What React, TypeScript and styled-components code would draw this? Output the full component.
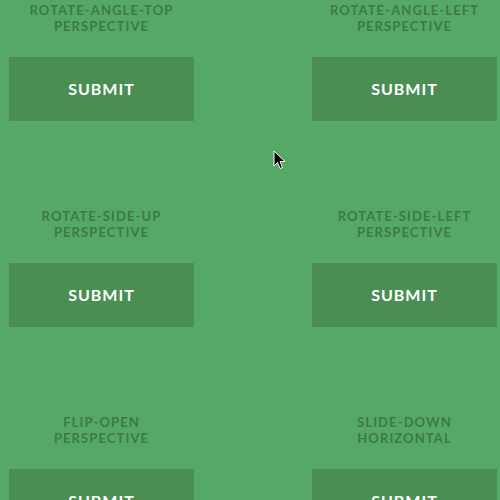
import React from "react";
import styled, { createGlobalStyle } from "styled-components";

const Global = createGlobalStyle`
  html, body {
    margin: 0;
    padding: 0;
    background: #55a865;
    overflow: hidden;
  }
  body {
    font-family: Lato, "Open Sans", sans-serif;
  }
`;

const Page = styled.div`
  position: relative;
  width: 500px;
  height: 500px;
  padding: 2px 0 0 9px;
  box-sizing: border-box;
  overflow: hidden;
`;

const Grid = styled.div`
  display: grid;
  grid-template-columns: 185px 185px;
  column-gap: 118px;
  row-gap: 87px;
`;

const Cell = styled.div`
  display: flex;
  flex-direction: column;
  align-items: stretch;
`;

const Label = styled.div`
  height: 32px;
  font-size: 13px;
  line-height: 16px;
  font-weight: 700;
  letter-spacing: 1.1px;
  text-transform: uppercase;
  text-align: center;
  color: #3e7a49;
  margin-bottom: 23px;
  white-space: nowrap;
`;

const Button = styled.button`
  height: 64px;
  border: none;
  padding: 0 0 2px;
  margin: 0;
  background: #4a8e53;
  color: #fff;
  font-family: Lato, "Open Sans", sans-serif;
  font-size: 16px;
  font-weight: 700;
  letter-spacing: 1px;
  text-transform: uppercase;
  cursor: pointer;
`;

const Cursor = styled.svg`
  position: absolute;
  left: 273px;
  top: 150px;
  pointer-events: none;
`;

const items = [
  ["rotate-angle-top", "perspective"],
  ["rotate-angle-left", "perspective"],
  ["rotate-side-up", "perspective"],
  ["rotate-side-left", "perspective"],
  ["flip-open", "perspective"],
  ["slide-down", "horizontal"],
];

export default function App() {
  return (
    <>
      <Global />
      <Page>
        <Grid>
          {items.map(([a, b]) => (
            <Cell key={a}>
              <Label>
                {a}
                <br />
                {b}
              </Label>
              <Button>Submit</Button>
            </Cell>
          ))}
        </Grid>
        <Cursor width="14" height="20" viewBox="0 0 14 20">
          <path
            d="M1 1 L1 16 L4.5 12.5 L7 18.5 L9.5 17.5 L7 11.5 L12 11.5 Z"
            fill="#000"
            stroke="#fff"
            strokeWidth="1"
            strokeLinejoin="round"
          />
        </Cursor>
      </Page>
    </>
  );
}
